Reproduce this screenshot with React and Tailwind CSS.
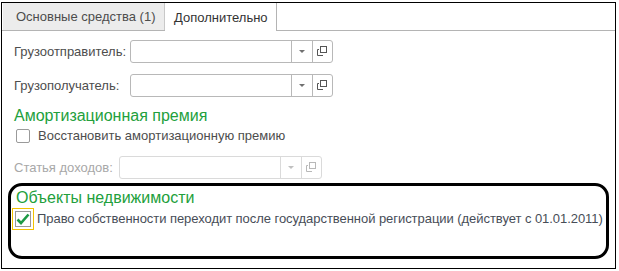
import React from "react";

function CopyIcon({ faded }) {
  const c = faded ? "#b8b8b8" : "#555";
  return (
    <svg width="11" height="11" viewBox="0 0 11 11">
      <path d="M0.5 3.5H2M0.5 3.5V9.5H6" stroke={c} fill="none" />
      <rect x="3.5" y="0.5" width="6" height="6" stroke={c} fill="white" />
    </svg>
  );
}

function Field({ label, labelWidth, disabled }) {
  return (
    <div className="flex items-center h-[23px]">
      <div
        className={"shrink-0 " + (disabled ? "text-[#a8a8a8]" : "text-[#4d4d4d]")}
        style={{ width: labelWidth }}
      >
        {label}
      </div>
      <div
        className={
          "flex h-[23px] w-[203px] rounded-[3px] border bg-white " +
          (disabled ? "border-[#dadada]" : "border-[#b8b8b8]")
        }
      >
        <div className="flex-1" />
        <div
          className={
            "w-[21px] flex items-center justify-center border-l " +
            (disabled ? "border-[#dadada]" : "border-[#b8b8b8]")
          }
        >
          <div
            className={
              "w-0 h-0 border-l-[3px] border-r-[3px] border-t-[3px] border-l-transparent border-r-transparent " +
              (disabled ? "border-t-[#c0c0c0]" : "border-t-[#707070]")
            }
          />
        </div>
        <div
          className={
            "w-[20px] flex items-center justify-center border-l " +
            (disabled ? "border-[#dadada]" : "border-[#b8b8b8]")
          }
        >
          <CopyIcon faded={disabled} />
        </div>
      </div>
    </div>
  );
}

export default function App() {
  return (
    <div className="w-[619px] h-[271px] bg-white font-['Liberation_Sans',Arial,sans-serif] text-[13px] text-[#4d4d4d] overflow-hidden">
      <div className="ml-[1px] mt-[2px] w-[615px] h-[267px] border border-black flex flex-col">
        {/* tabs */}
        <div className="flex h-[28px] border-b border-[#b4b4b4] pl-[1px]">
          <div className="w-[162px] h-[27px] bg-[#ececec] border-r border-[#c8c8c8] flex items-center pl-[13px] pt-[1px]">
            Основные средства (1)
          </div>
          <div className="w-[112px] h-[28px] -mb-[1px] bg-white border-r border-[#b4b4b4] flex items-center pl-[9px] pt-[1px] text-[#333]">
            Дополнительно
          </div>
        </div>

        <div className="flex flex-col pl-[12px] pt-[9px]">
          <Field label="Грузоотправитель:" labelWidth={116} />
          <div className="h-[11px]" />
          <Field label="Грузополучатель:" labelWidth={116} />

          <div className="mt-[10px] text-[16px] leading-[18px] text-[#22a03c]">
            Амортизационная премия
          </div>
          <div className="mt-[2px] flex items-center h-[18px]">
            <div className="ml-[2px] w-[14px] h-[14px] rounded-[2px] border border-[#9a9a9a] bg-white" />
            <span className="ml-[8px]">Восстановить амортизационную премию</span>
          </div>
          <div className="h-[11px]" />
          <Field label="Статья доходов:" labelWidth={105} disabled />
        </div>

        {/* annotated group */}
        <div className="ml-[6px] mt-[4px] w-[601px] h-[76px] rounded-[14px] border-[3px] border-black flex flex-col">
          <div className="pl-[5px] pt-[3px] text-[16px] leading-[18px] text-[#22a03c]">
            Объекты недвижимости
          </div>
          <div className="flex items-center mt-[1px] pl-[1px]">
            <div className="w-[22px] h-[22px] border border-[#f2c200] flex items-center justify-center">
              <div className="w-[16px] h-[16px] border border-[#9a9a9a] bg-white flex items-center justify-center">
                <svg width="14" height="12" viewBox="0 0 14 12">
                  <path d="M1.5 6.5L5 10L12.5 1.5" stroke="#1d9a45" strokeWidth="2.6" fill="none" />
                </svg>
              </div>
            </div>
            <span className="ml-[3px] whitespace-nowrap tracking-[-0.05px] text-[#474d57]">
              Право собственности переходит после государственной регистрации (действует с 01.01.2011)
            </span>
          </div>
        </div>
      </div>
    </div>
  );
}
